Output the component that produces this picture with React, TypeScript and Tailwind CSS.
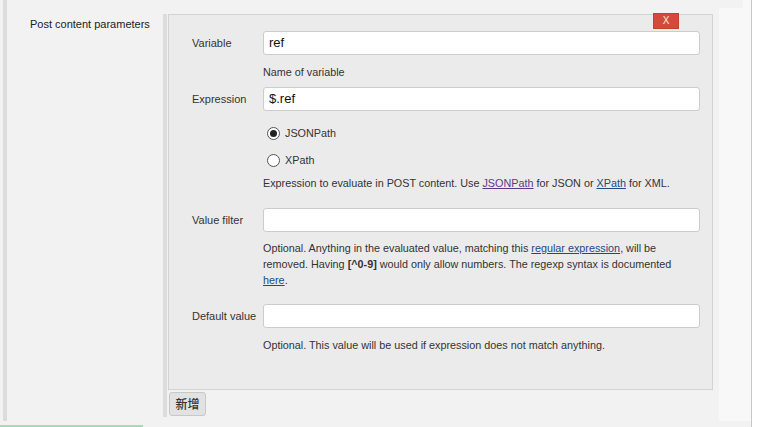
import React from "react";

const Field = ({ label, value }: { label: string; value?: string }) => (
  <div className="flex items-center">
    <div className="w-[94px] pl-[23px] text-[11px] text-[#333]">{label}</div>
    <div className="flex h-[24px] w-[437px] items-center rounded-[3px] border border-[#cccccc] bg-white pl-[5px] text-[13px] text-[#111]">
      {value}
    </div>
  </div>
);

const Help = ({ className, children }: { className?: string; children: React.ReactNode }) => (
  <div className={`ml-[94px] w-[430px] text-[10.8px] leading-[16px] text-[#333] ${className ?? ""}`}>
    {children}
  </div>
);

const Radio = ({ checked, label, className }: { checked?: boolean; label: string; className?: string }) => (
  <div className={`ml-[98px] flex h-[14px] items-center gap-[5px] ${className ?? ""}`}>
    <div className="flex h-[13px] w-[13px] items-center justify-center rounded-full border border-[#555] bg-white">
      {checked && <div className="h-[7px] w-[7px] rounded-full bg-[#222]" />}
    </div>
    <span className="text-[10.8px] text-[#333]">{label}</span>
  </div>
);

const App = () => {
  return (
    <div className="flex h-[427px] w-[777px] overflow-hidden bg-white font-['Liberation_Sans',Arial,sans-serif]">
      <div className="flex w-[752px] flex-col border-r border-[#c8c8c8] bg-[#f2f2f2]">
        <div className="flex h-[421px]">
          <div className="ml-[3px] w-[4px] bg-[#dcdcdc]" />
          <div className="w-[156px] pl-[23px] pt-[16px] text-[11px] leading-[16px] text-[#222]">
            Post content parameters
          </div>

          <div className="flex pt-[14px]">
            <div className="mr-px h-[403px] w-[4px] bg-[#dcdcdc]" />
            <div className="flex w-[545px] flex-col">
              <div className="flex h-[376px] flex-col border border-[#d3d3d3] bg-[#ebebeb]">
                <div className="flex h-[16px] justify-end pr-[33px]">
                  <div className="-mt-[2px] flex h-[16px] w-[26px] items-center justify-center border border-[#c5402f] bg-[#d44a3a] text-[10px] leading-none text-[#fcefd8]">
                    X
                  </div>
                </div>

                <Field label="Variable" value="ref" />
                <Help className="mt-[9px]">Name of variable</Help>

                <div className="mt-[7px]">
                  <Field label="Expression" value="$.ref" />
                </div>
                <Radio checked label="JSONPath" className="mt-[15px]" />
                <Radio label="XPath" className="mt-[13px]" />
                <Help className="mt-[8px]">
                  Expression to evaluate in POST content. Use{" "}
                  <span className="text-[#5b3a84] underline">JSONPath</span> for JSON or{" "}
                  <span className="text-[#204a87] underline">XPath</span> for XML.
                </Help>

                <div className="mt-[17px]">
                  <Field label="Value filter" />
                </div>
                <Help className="mt-[8px]">
                  Optional. Anything in the evaluated value, matching this{" "}
                  <span className="text-[#204a87] underline">regular expression</span>, will be
                  removed. Having <b>[^0-9]</b> would only allow numbers. The regexp syntax is
                  documented <span className="text-[#204a87] underline">here</span>.
                </Help>

                <div className="mt-[16px]">
                  <Field label="Default value" />
                </div>
                <Help className="mt-[9px]">
                  Optional. This value will be used if expression does not match anything.
                </Help>
              </div>

              <div className="mt-[2px] pl-px">
                <div className="flex h-[24px] w-[37px] items-center justify-center rounded-[3px] border border-[#c8c8c8] bg-[#e2e2e2] font-['Noto_Sans_CJK_SC',sans-serif] text-[12px] font-medium text-[#333]">
                  新增
                </div>
              </div>
            </div>
          </div>

          <div className="w-[6px]" />
          <div className="flex w-[32px] flex-col">
            <div className="flex h-[8px]">
              <div className="w-[24px]" />
              <div className="w-[8px] bg-[#f8f8f8]" />
            </div>
            <div className="flex-1 bg-[#f8f8f8]" />
          </div>
        </div>

        <div className="flex h-[6px] flex-col justify-end">
          <div className="h-[2px] w-[143px] bg-[#a8d8b8]" />
        </div>
      </div>
    </div>
  );
};

export default App;
